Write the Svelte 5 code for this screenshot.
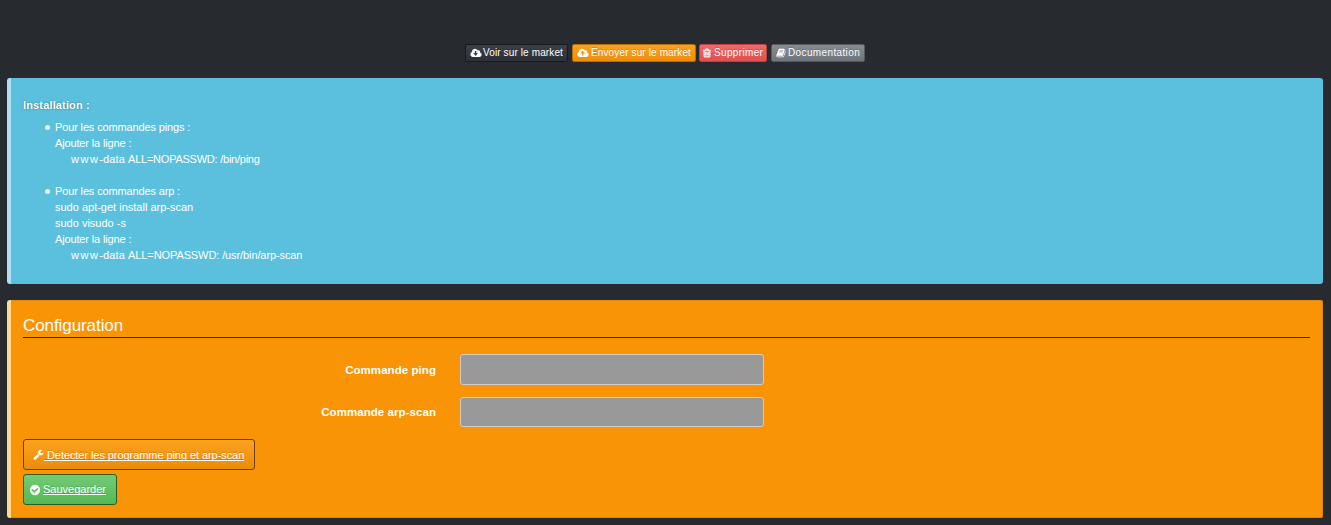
<script>
  const cloud = 'M1984 1152q0 159-112.500 271.500t-271.500 112.500h-1088q-185 0-316.500-131.500t-131.500-316.500q0-130 70-240t188-165q-2-30-2-43 0-212 150-362t362-150q156 0 285.500 87t188.500 231q71-62 166-62 106 0 181 75t75 181q0 76-41 138 130 31 213.500 135.500t83.500 238.500z';
  const bar = 'v576q0 14-9 23t-23 9h-64q-14 0-23-9t-9-23v-576q0-14 9-23t23-9h64q14 0 23 9t9 23z';
  const actions = [
    { kind: 'dark', label: 'Voir sur le market', width: 2048, path: 'M1344 928q0-14-9-23t-23-9h-224v-352q0-13-9.500-22.500t-22.500-9.500h-192q-13 0-22.500 9.500t-9.500 22.500v352h-224q-13 0-22.500 9.500t-9.500 22.500q0 14 9 23l352 352q9 9 23 9t23-9l351-351q10-12 10-24z' + cloud },
    { kind: 'amber', label: 'Envoyer sur le market', width: 2048, path: 'M1344 864q0-14-9-23l-352-352q-9-9-23-9t-23 9l-351 351q-10 12-10 24 0 14 9 23t23 9h224v352q0 13 9.500 22.500t22.500 9.500h192q13 0 22.500-9.500t9.500-22.500v-352h224q13 0 22.500-9.500t9.500-22.500z' + cloud },
    { kind: 'red', label: 'Supprimer', width: 1792, path: `M704 736${bar}M960 736${bar}M1216 736${bar}M1344 1460v-948h-896v948q0 22 7 40.500t14.500 27 10.500 8.500h832q3 0 10.500-8.500t14.500-27 7-40.500zm-672-1076h448l-48-117q-7-9-17-11h-317q-10 2-17 11zm928 32v64q0 14-9 23t-23 9h-96v948q0 83-47 143.500t-113 60.500h-832q-66 0-113-58.500t-47-141.500v-952h-96q-14 0-23-9t-9-23v-64q0-14 9-23t23-9h309l70-167q15-37 54-63t79-26h320q40 0 79 26t54 63l70 167h309q14 0 23 9t9 23z` },
    { kind: 'grey', label: 'Documentation', width: 1792, path: 'M1703 478q40 57 18 129l-275 906q-19 64-76.500 107.500t-122.500 43.500h-923q-77 0-148.500-53.500t-99.500-131.500q-24-67-2-127 0-4 3-27t4-37q1-8-3-21.500t-3-19.500q2-11 8-21t16.500-23.500 16.500-23.500q23-38 45-91.500t30-91.500q3-10 .5-30t-.5-28q3-11 17-28t17-23q21-36 42-92t25-90q1-9-2.500-32t.5-28q4-13 22-30.500t22-22.500q19-26 42.500-84.500t27.500-96.500q1-8-3-25.500t-2-26.500q2-8 9-18t18-23 17-21q8-12 16.500-30.500t15-35 16-36 19.500-32 26.500-23.500 36-11.500 47.500 5.500l-1 3q38-9 51-9h761q74 0 114 56t18 130l-274 906q-36 119-71.500 153.500t-128.500 34.500h-869q-27 0-38 15-11 16-1 43 24 70 144 70h923q29 0 56-15.500t35-41.500l300-987q7-22 5-57 38 15 59 43zm-1064 2q-4 13 2 22.500t20 9.500h608q13 0 25.500-9.500t16.500-22.500l21-64q4-13-2-22.500t-20-9.500h-608q-13 0-25.500 9.500t-16.500 22.500zm-83 256q-4 13 2 22.500t20 9.500h608q13 0 25.500-9.500t16.500-22.500l21-64q4-13-2-22.500t-20-9.500h-608q-13 0-25.500 9.500t-16.500 22.500z' }
  ];
  const wrench = 'M448 1472q0-26-19-45t-45-19-45 19-19 45 19 45 45 19 45-19 19-45zm644-420l-682 682q-37 37-90 37-52 0-91-37l-106-108q-38-36-38-90 0-53 38-91l681-681q39 98 114.500 173.500t173.500 114.500zm634-435q0 39-23 106-47 134-164.500 217.500t-258.500 83.500q-185 0-316.500-131.500t-131.500-316.500 131.500-316.500 316.500-131.500q58 0 121.500 16.500t107.500 46.500q16 11 16 28t-16 28l-293 169v224l193 107q5-3 79-48.500t135.500-81 70.500-35.500q15 0 23.500 10t8.500 25z';
  const check = 'M1412 734q0-28-18-46l-91-90q-19-19-45-19t-45 19l-408 407-226-226q-19-19-45-19t-45 19l-91 90q-18 18-18 46 0 27 18 45l362 362q19 19 45 19 27 0 46-19l543-543q18-18 18-45zm252 162q0 209-103 385.500t-279.500 279.500-385.500 103-385.500-103-279.500-279.500-103-385.500 103-385.500 279.500-279.500 385.500-103 385.500 103 279.500 279.500 103 385.500z';
</script>

<main>
  <nav>
    {#each actions as a}
      <a class="tool {a.kind}" href="#top">
        <svg viewBox="0 0 {a.width} 1792" class:wide={a.width > 1792}><path d={a.path} /></svg>
        <span>{a.label}</span>
      </a>
    {/each}
  </nav>

  <section class="panel info">
    <h4>Installation :</h4>
    <ul>
      <li>
        <p>Pour les commandes pings :</p>
        <p>Ajouter la ligne :</p>
        <p class="code"><span class="host">www</span><span class="data">{'-data '}</span>ALL=NOPASSWD: /bin/ping</p>
      </li>
      <li>
        <p>Pour les commandes arp :</p>
        <p class="plain">sudo apt-get install arp-scan</p>
        <p class="plain">sudo visudo -s</p>
        <p>Ajouter la ligne :</p>
        <p class="code user"><span class="host">www</span><span class="data">{'-data '}</span>ALL=NOPASSWD: /usr/bin/arp-scan</p>
      </li>
    </ul>
  </section>

  <section class="panel config">
    <h3>Configuration</h3>
    <form>
      <label for="ping">Commande ping</label><input id="ping" />
      <label for="arp">Commande arp-scan</label><input id="arp" />
    </form>
    <div class="buttons">
      <a class="btn detect" href="#detect"><svg viewBox="0 0 1792 1792"><path d={wrench} /></svg><span>&nbsp;Detecter les programme ping et arp-scan</span></a>
      <a class="btn save" href="#save"><svg viewBox="0 0 1792 1792"><path d={check} /></svg><span>Sauvegarder</span></a>
    </div>
  </section>
</main>

<style>
  :global(body) { background: #272a2f; overflow: hidden; }
  main {
    box-sizing: border-box;
    width: 1331px;
    height: 525px;
    padding: 44px 8px 0 7px;
    font: 11px/16px "Liberation Sans", Arial, sans-serif;
    color: #fff;
  }
  * { box-sizing: border-box; }
  svg { display: block; flex: none; fill: #fff; }
  nav { display: flex; justify-content: center; gap: 4px; height: 34px; }
  .tool {
    display: flex;
    align-items: center;
    height: 18px;
    padding: 0 4px;
    border: 1px solid;
    border-radius: 2px;
    color: #fff;
    font-size: 10px;
    text-decoration: none;
    white-space: nowrap;
    text-shadow: 0 -1px 0 rgba(0, 0, 0, .18);
  }
  .tool svg { width: 10px; height: 10px; margin-right: 2px; }
  .tool svg.wide { width: 12px; height: 10.5px; margin-right: 1px; }
  .dark { width: 103px; background: linear-gradient(#3b4049, #2d3035); border-color: #17191c; letter-spacing: .12px; }
  .amber { width: 124px; background: linear-gradient(#faa21e, #ee8e08); border-color: #b96c09; letter-spacing: .13px; }
  .tool.amber svg { margin-right: 2px; }
  .red { width: 68px; margin-left: -1px; padding-left: 2px; background: linear-gradient(#f1696a, #df504e); border-color: #b84444; letter-spacing: .35px; }
  .red svg { stroke: #fff; stroke-width: 70px; }
  .grey { width: 94px; background: linear-gradient(#868c94, #70757c); border-color: #565b61; letter-spacing: .37px; }

  .panel { border-left: 4px solid; border-radius: 3px; padding: 0 12px; }
  .info { height: 206px; padding-top: 19px; background: #5bc0de; border-left-color: #b4dcf5; }
  h4 { margin: 0; font-size: 11px; line-height: 16px; text-shadow: 0 0 2px rgba(0, 0, 0, .45); letter-spacing: .15px; }
  ul { margin: 6px 0 0; padding: 0 0 0 22px; list-style: none; }
  li { display: grid; grid-template-columns: 10px max-content; margin-bottom: 16px; }
  li::before { content: ""; width: 5px; height: 5px; margin-top: 6px; border-radius: 50%; background: #e9f8fc; }
  p { grid-column: 2; margin: 0; letter-spacing: -.14px; white-space: pre; }
  .plain { letter-spacing: 0; }
  .code { margin-left: 16px; letter-spacing: -.24px; }
  .user { letter-spacing: -.1px; }
  .host { letter-spacing: 1.5px; }
  .data { letter-spacing: .1px; }

  .config { height: 218px; margin-top: 16px; padding-top: 14px; background: #f99406; border-left-color: #fbdc91; box-shadow: inset 0 -1px #d8840e, inset -1px 0 #d8840e, inset 0 1px #e48a0c; }
  h3 { width: 1287px; height: 24px; margin: 0; border-bottom: 1px solid #33251a; font-size: 17px; line-height: 23px; font-weight: normal; letter-spacing: -.08px; }
  form { display: grid; grid-template-columns: 413px 304px; grid-template-rows: 31px 30px; column-gap: 24px; row-gap: 12px; margin-top: 16px; align-items: center; }
  label { text-align: right; font-size: 11.5px; font-weight: bold; letter-spacing: .06px; }
  input { width: 304px; height: 100%; border: 1px solid #d4cdc5; border-radius: 3px; background: #999; }
  .buttons { display: flex; flex-direction: column; align-items: flex-start; gap: 4px; margin-top: 12px; }
  .btn { display: flex; align-items: center; height: 31px; border: 1px solid; border-radius: 3px; color: #fff; text-decoration: underline; text-decoration-skip-ink: none; text-shadow: 0 -1px rgba(0, 0, 0, .15); white-space: nowrap; }
  .btn svg { width: 11px; height: 11px; }
  .detect { width: 232px; padding-left: 9px; background: linear-gradient(#fba121, #ed8d05); border-color: #703b05; letter-spacing: -.07px; }
  .save { width: 94px; padding: 0 0 1px 5px; background: linear-gradient(#75cb75, #53b953); border-color: #275f22; }
  .save svg { margin: 1px 2px 0 0; width: 12px; height: 12px; }
</style>
